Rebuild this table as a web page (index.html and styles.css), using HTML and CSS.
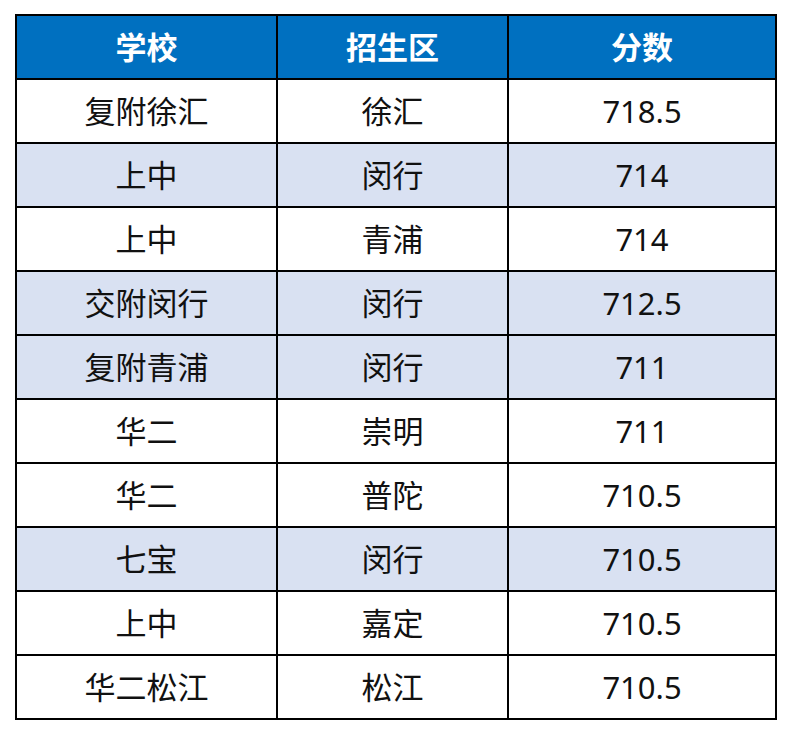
FILE: index.html
```html
<!DOCTYPE html>
<html lang="zh-CN">
<head>
<meta charset="utf-8">
<title>分数表</title>
<link rel="stylesheet" href="styles.css">
</head>
<body>
<table class="score-table">
  <colgroup>
    <col class="c1"><col class="c2"><col class="c3">
  </colgroup>
  <thead>
    <tr><th>学校</th><th>招生区</th><th>分数</th></tr>
  </thead>
  <tbody>
    <tr><td>复附徐汇</td><td>徐汇</td><td>718.5</td></tr>
    <tr class="band"><td>上中</td><td>闵行</td><td>714</td></tr>
    <tr><td>上中</td><td>青浦</td><td>714</td></tr>
    <tr class="band"><td>交附闵行</td><td>闵行</td><td>712.5</td></tr>
    <tr class="band"><td>复附青浦</td><td>闵行</td><td>711</td></tr>
    <tr><td>华二</td><td>崇明</td><td>711</td></tr>
    <tr><td>华二</td><td>普陀</td><td>710.5</td></tr>
    <tr class="band"><td>七宝</td><td>闵行</td><td>710.5</td></tr>
    <tr><td>上中</td><td>嘉定</td><td>710.5</td></tr>
    <tr><td>华二松江</td><td>松江</td><td>710.5</td></tr>
  </tbody>
</table>
</body>
</html>
```
FILE: styles.css
```css
html, body {
  margin: 0;
  padding: 0;
  background: #ffffff;
}
body {
  padding: 14px 0 0 15px;
  font-family: "Noto Sans", "Noto Sans CJK SC", sans-serif;
  color: #111111;
}
.score-table {
  border-collapse: collapse;
  table-layout: fixed;
  width: 760px;
}
.score-table .c1 { width: 261px; }
.score-table .c2 { width: 231px; }
.score-table .c3 { width: 268px; }
.score-table th,
.score-table td {
  border: 2px solid #000000;
  height: 62px;
  padding: 0;
  text-align: center;
  vertical-align: middle;
  font-size: 31px;
  line-height: 1;
}
.score-table th {
  background: #0070c0;
  color: #ffffff;
  font-weight: 700;
}
.score-table td {
  font-weight: 400;
}
.score-table tr.band td {
  background: #d9e1f2;
}
```
